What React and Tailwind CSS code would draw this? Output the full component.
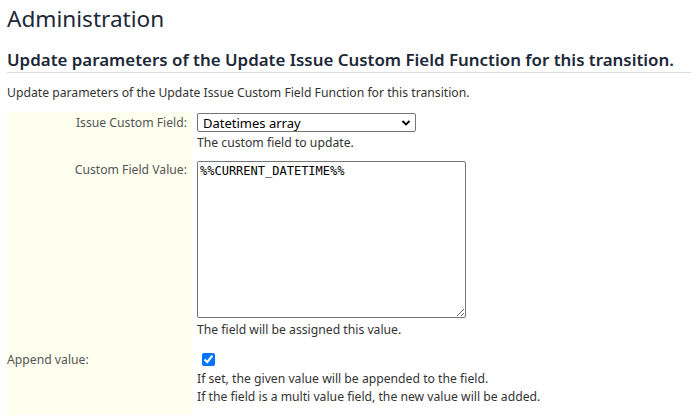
import React from "react";

export default function App() {
  return (
    <div className="w-[698px] h-[415px] overflow-hidden bg-white px-[7px] font-['Noto_Sans',sans-serif] text-[12.2px] leading-[18px] text-[#333]">
      <h2 className="pt-[4px] text-[22.6px] leading-[30px] font-normal text-[#1d2838]">Administration</h2>
      <h3 className="mt-[14px] border-b border-[#dddddd] text-[16.9px] leading-[24px] font-semibold text-[#1d2838] whitespace-nowrap">
        Update parameters of the Update Issue Custom Field Function for this transition.
      </h3>
      <p className="mt-[11px] text-[#333]">Update parameters of the Update Issue Custom Field Function for this transition.</p>

      <div className="mt-[10px] grid grid-cols-[185px_1fr]">
        {/* Row 1 */}
        <div className="bg-[#feffef] pt-[2px] pr-[5px] text-right text-[#555]">Issue Custom Field:</div>
        <div className="pl-[5px] pt-[1px] pb-[5px]">
          <div className="flex h-[19px] w-[219px] items-center justify-between rounded-[2px] border border-[#767676] pl-[5px] pr-[4px] text-[13px] text-black">
            <span>Datetimes array</span>
            <svg width="10" height="8" viewBox="0 0 10 8" className="text-black">
              <path d="M1.5 2 L5 5.5 L8.5 2" fill="none" stroke="currentColor" strokeWidth="1.8" />
            </svg>
          </div>
          <div className="mt-[2px]">The custom field to update.</div>
        </div>

        {/* Row 2 */}
        <div className="bg-[#feffef] pt-[4px] pr-[5px] text-right text-[#555]">Custom Field Value:</div>
        <div className="pl-[5px] pt-[4px] pb-[2px]">
          <textarea
            readOnly
            defaultValue="%%CURRENT_DATETIME%%"
            className="block h-[157px] w-[269px] rounded-[2px] border border-[#767676] px-[2px] py-[1px] font-['DejaVu_Sans_Mono',monospace] text-[12px] leading-[16px] text-black outline-none"
          />
          <div className="mt-[3px]">The field will be assigned this value.</div>
        </div>

        {/* Row 3 */}
        <div className="bg-[#feffef] pt-[10px] text-left text-[#555] h-[100px]">Append value:</div>
        <div className="pl-[5px] pt-[4px]">
          <input type="checkbox" defaultChecked className="ml-[5px] mt-[8px] block h-[13px] w-[13px] accent-[#0075ff]" />
          <div className="mt-[4px]">If set, the given value will be appended to the field.</div>
          <div>If the field is a multi value field, the new value will be added.</div>
        </div>
      </div>
    </div>
  );
}
